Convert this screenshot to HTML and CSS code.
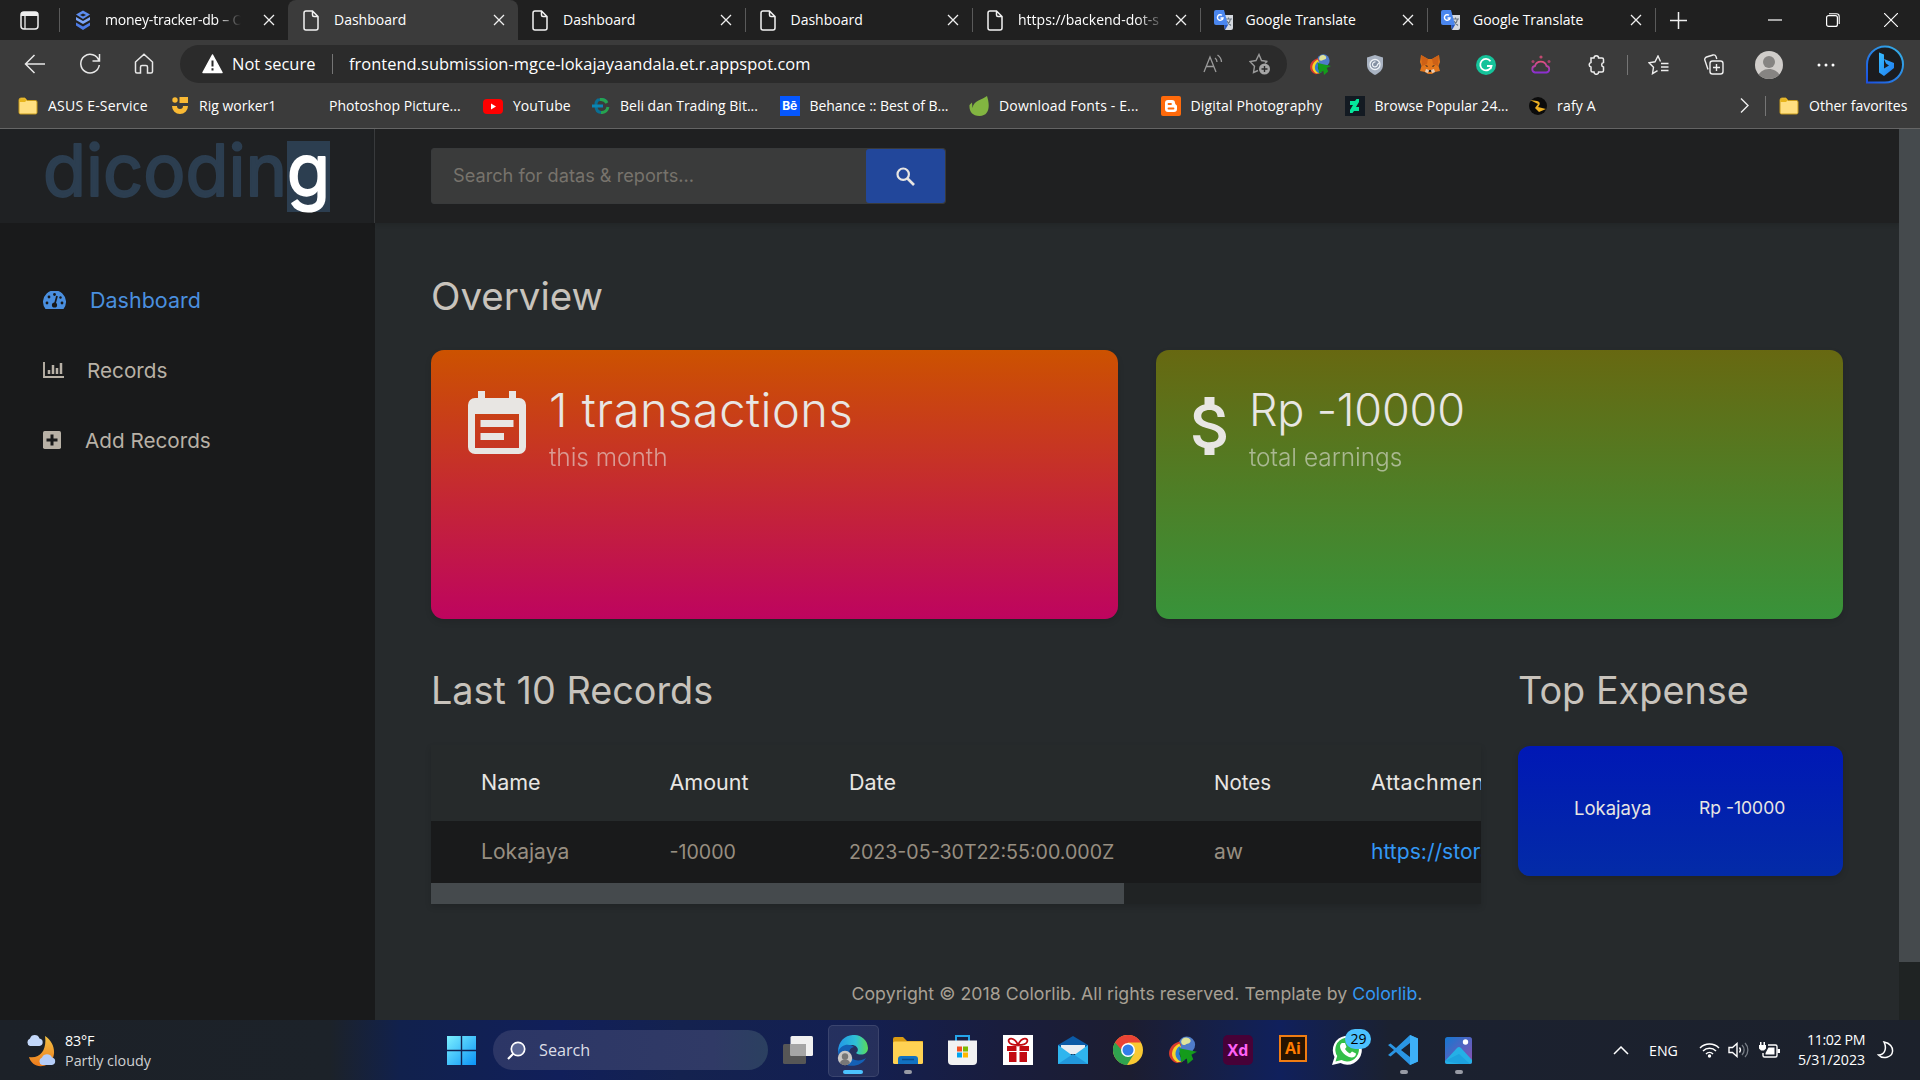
FILE: index.html
```html
<!DOCTYPE html>
<html lang="en">
<head>
<meta charset="utf-8">
<title>Dashboard</title>
<link rel="stylesheet" href="styles.css">
</head>
<body>
<svg class="defs" width="0" height="0">
  <defs>
    <symbol id="page" viewBox="0 0 16 21"><path d="M3 1h6.500l5.500 5.500V18a2 2 0 0 1-2 2H3a2 2 0 0 1-2-2V3a2 2 0 0 1 2-2zM9.500 1v4a1.500 1.500 0 0 0 1.500 1.500h4" fill="none" stroke="#f2f2f2" stroke-width="1.500"/></symbol>
    <symbol id="close" viewBox="0 0 12 12"><path d="M1 1l10 10M11 1L1 11" stroke="#f0f0f0" stroke-width="1.300"/></symbol>
    <symbol id="translate" viewBox="0 0 20 20"><path d="M8 5h11v13a2 2 0 0 1-2 2h-6z" fill="#d5d9df"/><path d="M11 9h7M14.500 7.500V9M16.500 9c-.5 3-2 5-4 6M13 11c.8 2 2 3 4 4.500" stroke="#6b7783" stroke-width="1.100" fill="none"/><path d="M2 0h8l4 15H2a2 2 0 0 1-2-2V2a2 2 0 0 1 2-2z" fill="#4a86ee"/><path d="M11 20l-1-5h4z" fill="#2756c0"/><path d="M8 5.300A2.800 2.800 0 1 0 9 8H6.500" fill="none" stroke="#fff" stroke-width="1.400"/></symbol>
    <symbol id="folder" viewBox="0 0 20 18"><path d="M1 3a2 2 0 0 1 2-2h4l2 2.500h8.500A1.500 1.500 0 0 1 19 5v10.500a1.500 1.500 0 0 1-1.500 1.500h-15A1.500 1.500 0 0 1 1 15.500z" fill="#ffdf80" stroke="#c69a1c"/><path d="M1.500 5V3A1.500 1.500 0 0 1 3 1.500h3.800L8.500 3.500 7 5z" fill="#e8b51d"/></symbol>
    <symbol id="idm" viewBox="0 0 30 30"><circle cx="19" cy="9.500" r="9" fill="#4f7cc9"/><path d="M13 6c1-5 7-6 10-2 1 4-3 4-5 5s-5 1-5-3z" fill="#dfe29a"/><path d="M11 6C-2 10-4 24 8 29l6-1C4 24 4 14 13 10z" fill="#d83a2c"/><path d="M11 8C1 13 1 24 9 28l6-1C6 23 7 15 13 12z" fill="#f5d52a"/><path d="M11 11C5 16 6 24 12 27l5-1C10 23 10 17 14 14z" fill="#2f7fd0"/><path d="M11 13l19 4-6 3 2 5-6 5-1-6-6 4z" fill="#149b1b"/></symbol>
  </defs>
</svg>

<div class="tabs">
  <div class="workspace"><svg width="19" height="19" viewBox="0 0 19 19"><rect x="1" y="1" width="17" height="17" rx="3" fill="none" stroke="#eee" stroke-width="1.500"/><path d="M1 3a2 2 0 0 1 2-2h13a2 2 0 0 1 2 2v2H1z" fill="#eee"/><path d="M5 5v13" stroke="#eee" stroke-width="1.300"/></svg></div>
  <div class="tab first"><svg class="fav" width="16" height="20" viewBox="0 0 16 20"><path d="M8 0l7 4-7 4.500L1 4z" fill="#5d8df0"/><path d="M8 3l3 1.500L8 6 5 4.500z" fill="#202020"/><path d="M1 6.500l7 4 7-4v3l-7 4-7-4z" fill="#7da6f8"/><path d="M1 12l7 4 7-4v3l-7 4.500L1 15z" fill="#4c7be6"/></svg><span class="label long">money-tracker-db – O</span><svg class="x"><use href="#close"/></svg></div>
  <div class="tab active"><svg class="fav"><use href="#page"/></svg><span class="label">Dashboard</span><svg class="x"><use href="#close"/></svg></div>
  <div class="tab plain"><svg class="fav"><use href="#page"/></svg><span class="label">Dashboard</span><svg class="x"><use href="#close"/></svg></div>
  <div class="tab"><svg class="fav"><use href="#page"/></svg><span class="label">Dashboard</span><svg class="x"><use href="#close"/></svg></div>
  <div class="tab"><svg class="fav"><use href="#page"/></svg><span class="label url">https://backend-dot-s</span><svg class="x"><use href="#close"/></svg></div>
  <div class="tab"><svg class="fav wide"><use href="#translate"/></svg><span class="label">Google Translate</span><svg class="x"><use href="#close"/></svg></div>
  <div class="tab"><svg class="fav wide"><use href="#translate"/></svg><span class="label">Google Translate</span><svg class="x"><use href="#close"/></svg></div>
  <div class="tab new"><svg width="17" height="17" viewBox="0 0 17 17"><path d="M8.500 0v17M0 8.500h17" stroke="#eee" stroke-width="1.500"/></svg></div>
  <div class="window">
    <svg width="14" height="14" viewBox="0 0 14 14"><path d="M0 7h14" stroke="#fff" stroke-width="1.200"/></svg>
    <svg width="14" height="14" viewBox="0 0 14 14"><rect x=".6" y="2.600" width="10.800" height="10.800" rx="2" fill="none" stroke="#fff" stroke-width="1.200"/><path d="M3 .8h7.500a2.700 2.700 0 0 1 2.700 2.700V11" fill="none" stroke="#fff" stroke-width="1.100"/></svg>
    <svg width="14" height="14" viewBox="0 0 12 12"><path d="M0 0l12 12M12 0L0 12" stroke="#fff"/></svg>
  </div>
</div>

<div class="toolbar">
  <div class="nav-buttons">
    <svg width="22" height="20" viewBox="0 0 22 20"><path d="M21 10H2M10.500 1L1.500 10l9 9" fill="none" stroke="#e8e8e8" stroke-width="1.500"/></svg>
    <svg width="22" height="22" viewBox="0 0 22 22"><path d="M20 8A9.300 9.300 0 1 0 20.300 12M20.500 1v7h-7" fill="none" stroke="#e8e8e8" stroke-width="1.500"/></svg>
    <svg width="20" height="21" viewBox="0 0 20 21"><path d="M1.500 9L10 1.300 18.500 9v9.500a1.500 1.500 0 0 1-1.500 1.500h-3.500v-6a1.500 1.500 0 0 0-1.500-1.500H8A1.500 1.500 0 0 0 6.500 14v6H3a1.500 1.500 0 0 1-1.500-1.500z" fill="none" stroke="#e8e8e8" stroke-width="1.500"/></svg>
  </div>
  <div class="address">
    <svg class="warn" width="21" height="20" viewBox="0 0 21 20"><path d="M10.500 1L20 18.500H1z" fill="#fff" stroke="#fff" stroke-width="1.500" stroke-linejoin="round"/><path d="M10.500 6.500v6M10.500 14.300v2.200" stroke="#2b2b2b" stroke-width="2"/></svg>
    <span class="insecure">Not secure</span><span class="bar"></span><span class="href">frontend.submission-mgce-lokajayaandala.et.r.appspot.com</span>
    <svg class="read" width="20" height="20" viewBox="0 0 20 20"><path d="M1 18L7 3l6 15M3.200 12.500h7.600M12 4a5 5 0 0 1 2 4M14.500 1a9 9 0 0 1 4 7" fill="none" stroke="#9a9a9a" stroke-width="1.300"/></svg>
    <svg width="22" height="22" viewBox="0 0 22 22"><path d="M18.500 8.500L12.500 7.500 10 1.500 7 7.500 1 8.500l4.500 4.700-1 6.300 4.500-2" fill="none" stroke="#9a9a9a" stroke-width="1.400"/><path d="M18 8.500l-2 1.800" stroke="#9a9a9a" stroke-width="1.400"/><circle cx="15.500" cy="16" r="5.500" fill="#a5a5a5"/><path d="M15.500 13v6M12.500 16h6" stroke="#2b2b2b" stroke-width="1.400"/></svg>
  </div>
  <div class="extensions">
    <svg width="21" height="21"><use href="#idm"/></svg>
    <svg width="18" height="20" viewBox="0 0 18 20"><path d="M9 0l8 2.500V10c0 5-4 8-8 10-4-2-8-5-8-10V2.500z" fill="#a9b3c2"/><circle cx="9" cy="9.500" r="5" fill="#8490a3" stroke="#eef2f7" stroke-width="1.300"/><path d="M9.500 7a2.500 2.500 0 1 0 2 2.500L13 8" fill="none" stroke="#eef2f7" stroke-width="1.200"/></svg>
    <svg width="20" height="19" viewBox="0 0 20 19"><path d="M1 0l7 4h4l7-4 1 7-1.500 4 1.500 5-5 1-3 2H8l-3-2-5-1 1.500-5L0 7z" fill="#e2761b"/><path d="M1 0l7 4-1 5-5 2zM19 0l-7 4 1 5 5 2z" fill="#cd6116"/><path d="M5 10l3 1-1 1zM15 10l-3 1 1 1zM8 15h4l-1 2H9z" fill="#222"/><path d="M6 14l3 1-1 3-3-1zM14 14l-3 1 1 3 3-1z" fill="#e8cdb5"/></svg>
    <svg width="20" height="20" viewBox="0 0 20 20"><circle cx="10" cy="10" r="10" fill="#15c39a"/><path d="M14.500 6.200A5.700 5.700 0 1 0 15.500 11H11M15.500 11l-1 3" fill="none" stroke="#fff" stroke-width="1.800"/></svg>
    <svg width="20" height="19" viewBox="0 0 20 19"><defs><linearGradient id="cl" x2="0" y2="1"><stop stop-color="#e0507e"/><stop offset="1" stop-color="#8b2fd0"/></linearGradient></defs><path d="M4 17.500a3.300 3.300 0 0 1 0-6.500 6 6 0 0 1 11.500 0 3.300 3.300 0 0 1 0 6.500z" fill="none" stroke="url(#cl)" stroke-width="1.800"/><circle cx="10" cy="2" r="1.600" fill="#c04a70"/><circle cx="2" cy="6.500" r="1.500" fill="#a8436a"/><circle cx="18" cy="6.500" r="1.500" fill="#a8436a"/></svg>
    <svg width="20" height="21" viewBox="0 0 20 21"><path d="M5 4h3a2.300 2.300 0 0 1 4.600 0H16a1.500 1.500 0 0 1 1.500 1.500V8.500a2.300 2.300 0 0 0 0 4.500v3.500A1.500 1.500 0 0 1 16 18h-3.400a2.300 2.300 0 0 1-4.600 0H6.500A1.500 1.500 0 0 1 5 16.500V13a2.300 2.300 0 0 1 0-4.500z" fill="none" stroke="#eee" stroke-width="1.500"/></svg>
    <span class="bar"></span>
    <svg width="21" height="20" viewBox="0 0 21 20"><path d="M12.500 6.500L10 1 7 6.800l-6 1 4.500 4.500-1 6.400 5-3M13 8.500h7.500M13 12h7.500M13 15.500h7.500" fill="none" stroke="#eee" stroke-width="1.400"/></svg>
    <svg width="21" height="21" viewBox="0 0 21 21"><rect x="7" y="7" width="13" height="13" rx="2.500" fill="none" stroke="#eee" stroke-width="1.400"/><path d="M13.500 10v7M10 13.500h7M5 15.500l-3-9A2.500 2.500 0 0 1 3.500 3L10 1a2.500 2.500 0 0 1 3 1.500l.8 2.500" fill="none" stroke="#eee" stroke-width="1.400"/></svg>
    <svg width="28" height="28" viewBox="0 0 28 28"><defs><clipPath id="av"><circle cx="14" cy="14" r="14"/></clipPath></defs><g clip-path="url(#av)"><path d="M0 0h28v28H0z" fill="#d0cdca"/><circle cx="14" cy="11" r="6" fill="#868482"/><path d="M2 30c0-16 24-16 24 0z" fill="#868482"/></g></svg>
    <svg width="18" height="4" viewBox="0 0 18 4"><circle cx="2" cy="2" r="1.500" fill="#fff"/><circle cx="9" cy="2" r="1.500" fill="#fff"/><circle cx="16" cy="2" r="1.500" fill="#fff"/></svg>
    <svg width="38" height="39" viewBox="0 0 38 39"><defs><linearGradient id="bg1" x1="1" x2="0" y2="1"><stop stop-color="#36b6e8"/><stop offset="1" stop-color="#1b50e0"/></linearGradient><linearGradient id="bg2" x2="1" y2="1"><stop stop-color="#37bdff"/><stop offset="1" stop-color="#1f7af0"/></linearGradient></defs><path d="M1 37.500V19.500A18 18 0 1 1 19 37.500z" fill="#1b1c1f" stroke="url(#bg1)" stroke-width="2"/><path d="M13 7.500l5 2v14l5-3-3-2-2-4.500 10 4v5L18 31l-5-3.500z" fill="url(#bg2)"/></svg>
  </div>
</div>

<div class="bookmarks">
  <div class="bm"><svg width="20" height="18"><use href="#folder"/></svg><span class="w100">ASUS E-Service</span></div>
  <div class="bm"><svg width="18" height="18" viewBox="0 0 18 18"><path d="M1 9a8 8 0 0 0 16 0h-5a3 3 0 0 1-6 0z" fill="#f9b934"/><circle cx="4" cy="3" r="2.700" fill="#f9b934"/><path d="M8.500 0H17v6H8.500z" fill="#f9b934"/></svg><span class="w78">Rig worker1</span></div>
  <div class="bm"><span class="blank"></span><span class="w132">Photoshop Picture...</span></div>
  <div class="bm"><svg width="20" height="15" viewBox="0 0 20 15"><rect width="20" height="15" rx="4" fill="#f00"/><path d="M8 4.500v6l5-3z" fill="#fff"/></svg><span class="w57">YouTube</span></div>
  <div class="bm"><svg width="18" height="16" viewBox="0 0 18 16"><path d="M14.500 4A6.500 6.500 0 0 0 8 1.500C3 2 4 7 4 8s0 6 5 6.500" fill="none" stroke="#0a6f94" stroke-width="3"/><path d="M8 1.500c3-.3 5.500.5 7 3.500M16 9c-1 4-4 5.700-7 5.500" fill="none" stroke="#26a450" stroke-width="3"/><path d="M0 8h11" stroke="#0a86b4" stroke-width="3"/></svg><span class="w137">Beli dan Trading Bit...</span></div>
  <div class="bm"><b class="be">Bē</b><span class="w138">Behance :: Best of B...</span></div>
  <div class="bm"><svg width="20" height="20" viewBox="0 0 20 20"><path d="M18 0c3 9 3 20-7.500 20C3 20 0 15 .5 9L3 6.500 3.500 12C5 4 13 4 18 0z" fill="#82b541"/></svg><span class="w139">Download Fonts - E...</span></div>
  <div class="bm"><svg width="20" height="20" viewBox="0 0 20 20"><rect width="20" height="20" rx="2" fill="#ff6a0b"/><path d="M7 4h4a3 3 0 0 1 3 3c0 2 2 1.500 2 3v3a3 3 0 0 1-3 3H7a3 3 0 0 1-3-3V7a3 3 0 0 1 3-3z" fill="#fff"/><path d="M7.500 8H10M7.500 12.500h5" stroke="#ff6a0b" stroke-width="1.800" stroke-linecap="round"/></svg><span class="w132 wider">Digital Photography</span></div>
  <div class="bm"><svg width="20" height="20" viewBox="0 0 20 20"><path d="M0 0h20v20H0z" fill="#131a22"/><path d="M14 3v3l-3 5h3v4H9l-1.500 2H5v-3l3-5H5V5h5l1.500-2z" fill="#05e59b"/></svg><span class="w133">Browse Popular 24...</span></div>
  <div class="bm"><svg width="18" height="18" viewBox="0 0 18 18"><circle cx="9" cy="9" r="9" fill="#0b0b0b"/><path d="M1 3l7 1c4 1 3 4 1 6l8 2-7 3-4-4 3-4z" fill="#edb022"/></svg><span class="w39">rafy A</span></div>
  <svg class="more" width="9" height="15" viewBox="0 0 9 15"><path d="M1 .5l7 7-7 7" fill="none" stroke="#eee" stroke-width="1.400"/></svg>
  <span class="bar"></span>
  <div class="bm"><svg width="20" height="18"><use href="#folder"/></svg><span class="w98">Other favorites</span></div>
</div>

<div class="viewport">
  <aside class="sidebar">
    <div class="logo">
      <svg width="290" height="84" viewBox="0 0 290 84"><rect x="243" y="10" width="43" height="71" fill="#2c3e50"/><text class="word" x="-1" y="65" textLength="244" lengthAdjust="spacingAndGlyphs">dicodin</text><text class="word light" x="243" y="65" textLength="43" lengthAdjust="spacingAndGlyphs">g</text></svg>
    </div>
    <nav class="menu">
      <a class="item current"><svg width="23" height="18" viewBox="0 0 23 18"><path d="M2.500 18A11.500 11.500 0 1 1 20.500 18z" fill="#4a8fdf"/><g fill="#191a1b"><circle cx="4" cy="12" r="1.400"/><circle cx="6" cy="6" r="1.400"/><circle cx="11.500" cy="3.500" r="1.400"/><circle cx="19" cy="12" r="1.400"/><circle cx="17.500" cy="6.500" r="1.200"/><circle cx="11.500" cy="14" r="2.600"/></g><path d="M11.700 13.500L14 5" stroke="#191a1b" stroke-width="1.700"/></svg><span>Dashboard</span></a>
      <a class="item records"><svg width="21" height="16" viewBox="0 0 21 16"><path d="M1 0v15h20" fill="none" stroke="#b8b1a6" stroke-width="1.900"/><path d="M6 12V8M10 12V3M14 12V6M18 12V1" stroke="#b8b1a6" stroke-width="2.500"/></svg><span>Records</span></a>
      <a class="item add"><svg width="18" height="18" viewBox="0 0 18 18"><rect width="18" height="18" rx="1.700" fill="#b8b1a6"/><path d="M9 3.500v11M3.500 9h11" stroke="#191a1b" stroke-width="3"/></svg><span>Add Records</span></a>
    </nav>
  </aside>
  <div class="page">
    <header class="top"><div class="search"><span class="hint">Search for datas &amp; reports...</span><span class="go"><svg width="19" height="19" viewBox="0 0 19 19"><circle cx="7.200" cy="7.200" r="5.700" fill="none" stroke="#e8e6e3" stroke-width="2.200"/><path d="M11.500 11.500l6.500 6.500" stroke="#e8e6e3" stroke-width="2.600"/></svg></span></div></header>
    <main class="content">
      <h2 class="overview">Overview</h2>
      <div class="cards">
        <section class="card orange">
          <svg class="cal" width="58" height="64" viewBox="0 0 58 64"><path d="M10 0h7v7h24V0h7v7h3a7 7 0 0 1 7 7v42a7 7 0 0 1-7 7H7a7 7 0 0 1-7-7V14a7 7 0 0 1 7-7h3zM7 23v34h44V23z" fill="#e8e6e3" fill-rule="evenodd"/><path d="M12.500 29h33v7h-33zM12.500 42H36v7H12.500z" fill="#e8e6e3"/></svg>
          <div><p class="big tx">1 transactions</p><p class="small">this month</p></div>
        </section>
        <section class="card green">
          <svg class="dollar" width="33" height="58" viewBox="0 0 33 58"><path d="M11.500 0h10v7.500C28 9 31.500 13.500 31.800 20h-7.200c-.2-4.500-3-7-8-7-5.300 0-8.300 2.300-8.300 6 0 3.400 2.700 5.300 9.500 7.100C28 28.600 33 33 33 39.500c0 6.300-4.300 10.300-11.500 11.500v7h-10v-7C4.500 49.500.3 45.500 0 38.300h7.200c.5 4.700 3.800 7 9.300 7 6.300 0 9-2.800 9-6 0-3.600-2-5.700-9.500-7.600C6.500 29.300.8 26 .8 19 .8 13 5 8.800 11.500 7.500z" fill="#e8e6e3"/></svg>
          <div><p class="big rp">Rp -10000</p><p class="small">total earnings</p></div>
        </section>
      </div>
      <div class="lower">
        <section class="recent">
          <h2>Last 10 Records</h2>
          <div class="table">
            <div class="row head"><span>Name</span><span>Amount</span><span>Date</span><span class="n">Notes</span><span class="at">Attachment</span></div>
            <div class="row"><span>Lokajaya</span><span class="num">-10000</span><span class="num">2023-05-30T22:55:00.000Z</span><span>aw</span><a>https://storage.googleapis.com</a></div>
            <div class="hscroll"><div class="hthumb"></div></div>
          </div>
        </section>
        <section class="top-expense">
          <h2>Top Expense</h2>
          <div class="expense"><span class="who">Lokajaya</span><span>Rp -10000</span></div>
        </section>
      </div>
      <footer>Copyright © 2018 Colorlib. All rights reserved. Template by <a>Colorlib</a>.</footer>
    </main>
  </div>
  <div class="vscroll"><div class="vthumb"></div></div>
</div>

<div class="taskbar">
  <div class="weather">
    <svg width="30" height="34" viewBox="0 0 30 34"><defs><linearGradient id="mn" x2="0" y2="1"><stop stop-color="#f3c245"/><stop offset="1" stop-color="#ee7b1b"/></linearGradient></defs><path d="M19 3c11 7 12 22 3 28-8 5-17 1-19-7 12 2 18-8 16-21z" fill="url(#mn)"/><path d="M4 13a4 4 0 0 1 0-7.500 5 5 0 0 1 9.500 0 3.800 3.800 0 0 1 0 7.500z" fill="#c3d8fa"/><path d="M16 32a4 4 0 0 1 0-7.500 5.500 5.500 0 0 1 10 0 3.800 3.800 0 0 1 0 7.500z" fill="#b5cdf8"/></svg>
    <div class="report"><div class="temp">83°F</div><div class="sky">Partly cloudy</div></div>
  </div>
  <svg class="start" width="29" height="29" viewBox="0 0 29 29"><defs><linearGradient id="wn" x2="1" y2="1"><stop stop-color="#7cf0ff"/><stop offset="1" stop-color="#0a93f7"/></linearGradient></defs><path d="M0 0h13.800v13.800H0zM15.200 0H29v13.800H15.200zM0 15.200h13.800V29H0zM15.200 15.200H29V29H15.200z" fill="url(#wn)"/></svg>
  <div class="tsearch"><svg width="19" height="19" viewBox="0 0 19 19"><circle cx="11" cy="8" r="6.700" fill="#5a6694" stroke="#fff" stroke-width="1.700"/><path d="M6.500 12.500L1 18" stroke="#fff" stroke-width="2.200"/></svg><span>Search</span></div>
  <div class="apps">
    <div class="app"><svg width="30" height="28" viewBox="0 0 30 28"><rect y="8" width="23" height="20" rx="1.500" fill="#565656"/><rect x="7.500" width="22.500" height="20" rx="1.500" fill="#f0f0f0"/><path d="M7.500 8H23v12H7.500z" fill="#a5a5a5"/></svg></div>
    <div class="app on"><svg width="32" height="31" viewBox="0 0 32 31"><defs><linearGradient id="ed" x2="1"><stop stop-color="#2196e8"/><stop offset=".6" stop-color="#2fc1d5"/><stop offset="1" stop-color="#5bdc55"/></linearGradient></defs><path d="M1 17C1-5 30-5 31 13c0 7-8 8-12 5 4-3 1-8-4-8C8 10 3 15 1 19z" fill="url(#ed)"/><path d="M1 17c3-8 11-9 16-5-7 1-6 11 1 13 4 1 8 0 11-2-5 10-21 10-26 2z" fill="#1460b5"/><circle cx="8" cy="23" r="7.200" fill="#c9c6c4"/><circle cx="8" cy="21.500" r="3.200" fill="#777"/><path d="M3 28c1-5 9-5 10 0-3 3-7 3-10 0z" fill="#777"/></svg><i class="run wide"></i></div>
    <div class="app"><svg width="30" height="27" viewBox="0 0 30 27"><path d="M0 2a2 2 0 0 1 2-2h8l4 4h16v8H0z" fill="#d99a12"/><rect y="4.500" width="30" height="22.500" rx="1.500" fill="#ffd253"/><path d="M5 27v-5a3 3 0 0 1 3-3h14a3 3 0 0 1 3 3v5z" fill="#1272c2"/><path d="M9 22.500h12" stroke="#0a4d8d" stroke-width="1.500"/></svg><i class="run"></i></div>
    <div class="app"><svg width="29" height="30" viewBox="0 0 29 30"><path d="M8 7V1h13v6" fill="none" stroke="#25a4ea" stroke-width="2"/><path d="M0 5.500h29V26a4 4 0 0 1-4 4H4a4 4 0 0 1-4-4z" fill="#f2f2f2"/><path d="M9 11.500h5v5H9z" fill="#f25022"/><path d="M15 11.500h5v5h-5z" fill="#7fba00"/><path d="M9 17.500h5v5H9z" fill="#00a4ef"/><path d="M15 17.500h5v5h-5z" fill="#ffb900"/></svg></div>
    <div class="app"><svg width="30" height="30" viewBox="0 0 30 30"><path d="M0 0h30v30H0z" fill="#fff"/><path d="M4 11h22v5H4zM6 17h18v10H6z" fill="#c30b12"/><path d="M13.500 11h3v16h-3z" fill="#fff"/><path d="M15 10C11 1 4 3 6 7c1 3 6 3 9 3 3 0 8 0 9-3 2-4-5-6-9 3z" fill="none" stroke="#c30b12" stroke-width="1.800"/></svg></div>
    <div class="app"><svg width="30" height="28" viewBox="0 0 30 28"><path d="M15 0l15 9v4H0V9z" fill="#0b5aa6"/><path d="M3 9h24v9H3z" fill="#e8edf2"/><path d="M0 9l15 11 15-11v19H0z" fill="#2fb5ee"/><path d="M15 18l15 10H0z" fill="#2298dc"/></svg></div>
    <div class="app"><svg width="30" height="30" viewBox="0 0 30 30"><circle cx="15" cy="15" r="15" fill="#f9c933"/><path d="M2 7.500A15 15 0 0 0 14 30l7-11-6-4z" fill="#2fa24f"/><path d="M2 7.500A15 15 0 0 1 28 7.500H15l-5 9z" fill="#ea4335"/><circle cx="15" cy="15" r="7" fill="#fff"/><circle cx="15" cy="15" r="5.500" fill="#327ee8"/></svg></div>
    <div class="app"><svg width="30" height="28"><use href="#idm"/></svg></div>
    <div class="app"><span class="xd">Xd</span></div>
    <div class="app"><span class="ai">Ai</span></div>
    <div class="app"><svg width="31" height="30" viewBox="0 0 31 30"><path d="M0 30l2.500-8A14.500 14.500 0 1 1 8.500 28z" fill="#fff"/><path d="M3.500 26.500l1.700-5.500A11.800 11.800 0 1 1 9.500 25z" fill="#34bf49"/><path d="M10 8l3 0 1.500 4-1.500 2c1.500 2.500 3 3.500 5 4.500l2-2 4 2c0 4-4 4.500-7 3.500C12 20 8 15 8 11c0-1 1-2.500 2-3z" fill="#fff"/></svg><em class="count">29</em></div>
    <div class="app"><svg width="30" height="30" viewBox="0 0 30 30"><path d="M22 0l8 3.500v23L22 30 8 17l-5.500 4.500L0 20l6-5-6-5 2.500-1.500L8 13zM22 8l-9 7 9 7z" fill="#2a95e3" fill-rule="evenodd"/><path d="M22 0l8 3.500v23L22 30z" fill="#3db0f7"/></svg><i class="run"></i></div>
    <div class="app"><svg width="27" height="27" viewBox="0 0 27 27"><defs><linearGradient id="ph" x2="1" y2="1"><stop stop-color="#1378d2"/><stop offset="1" stop-color="#8f4fb0"/></linearGradient></defs><rect width="27" height="27" rx="2.500" fill="url(#ph)"/><path d="M0 24l12-13q2-2 4 0l11 12v1.500A2.500 2.500 0 0 1 24.500 27h-22A2.500 2.500 0 0 1 0 24.500z" fill="#25b0e6"/><path d="M15 27L0 24l14-7 11 10z" fill="#1694d8" opacity=".5"/><circle cx="20.500" cy="5" r="2.700" fill="#fff"/></svg><i class="run"></i></div>
  </div>
  <div class="tray">
    <svg width="16" height="9" viewBox="0 0 16 9"><path d="M1 8l7-7 7 7" fill="none" stroke="#fff" stroke-width="1.500"/></svg>
    <span class="lang">ENG</span>
    <svg width="21" height="16" viewBox="0 0 21 16"><path d="M1 6a13.500 13.500 0 0 1 19 0M4 9a9.200 9.200 0 0 1 13 0M7 12a5 5 0 0 1 7 0" fill="none" stroke="#fff" stroke-width="1.500"/><circle cx="10.500" cy="14" r="1.700" fill="#fff"/></svg>
    <svg class="vol" width="21" height="16" viewBox="0 0 21 16"><path d="M1 5.500h3.500L9 1.500v13l-4.500-4H1z" fill="none" stroke="#fff" stroke-width="1.400"/><path d="M11.500 5.500a4 4 0 0 1 0 5" fill="none" stroke="#fff" stroke-width="1.300"/><path d="M14 3a7 7 0 0 1 0 10M17 1a10 10 0 0 1 0 14" fill="none" stroke="#777d85" stroke-width="1.300"/></svg>
    <svg class="bat" width="21" height="17" viewBox="0 0 21 17"><path d="M9 3h7.500A1.500 1.500 0 0 1 18 4.500v9a1.500 1.500 0 0 1-1.500 1.500h-11A1.500 1.500 0 0 1 4 13.500V11" fill="none" stroke="#fff" stroke-width="1.400"/><path d="M9.500 5.500h6v7h-9V11zM18.500 7H21v4h-2.500zM0 3h7v3.500L5 8.500H2L0 6.500zM1 0h1.500v3H1zM4.500 0H6v3H4.500z" fill="#fff"/></svg>
    <div class="clock"><div class="time">11:02 PM</div><div>5/31/2023</div></div>
    <svg width="17" height="18" viewBox="0 0 17 18"><path d="M7 1c6 1 9 5 8.500 9.500C15 16 6 19 1.500 14 8 14 10 7 7 1z" fill="none" stroke="#fff" stroke-width="1.500"/></svg>
  </div>
</div>
</body>
</html>
```
FILE: styles.css
```css
* { box-sizing: border-box; }
body { margin: 0; width: 1920px; height: 1080px; overflow: hidden; background: #262a2c; font-family: "Open Sans", sans-serif; color: #fff; display: flex; flex-direction: column; }
svg { display: block; flex: none; }
.defs { position: absolute; }
p, h2 { margin: 0; font-weight: 400; }

/* browser tabs */
.tabs { height: 40px; flex: none; background: #202020; display: flex; }
.workspace { width: 59px; padding: 11px 0 0 20px; }
.tab { width: 227.5px; height: 40px; display: flex; align-items: center; padding: 0 13px 0 15px; background: linear-gradient(#5a5a5a, #5a5a5a) 0 8px / 1px 24px no-repeat; }
.tab.active { background: #3b3b3b; border-radius: 8px 8px 0 0; width: 230px; }
.tab.plain { width: 226.500px; padding-left: 14px; background: none; }
.tab.first { width: 229px; padding-left: 16px; }
.fav { width: 16px; height: 21px; }
.fav.wide { width: 20px; height: 20px; margin-left: -1px; }
.fav.wide + .label { padding-left: 12px; }
.label { flex: 1; padding-left: 15px; font-size: 14px; line-height: 38px; white-space: nowrap; overflow: hidden; color: #fff; }
.label.long { flex: 0 1 150px; margin-right: auto; letter-spacing: -.2px; padding-left: 14px; -webkit-mask-image: linear-gradient(90deg, #000 84%, transparent); mask-image: linear-gradient(90deg, #000 84%, transparent); }
.label.url { flex: 0 1 163px; margin-right: auto; -webkit-mask-image: linear-gradient(90deg, #000 82%, transparent); mask-image: linear-gradient(90deg, #000 82%, transparent); }
.x { width: 12px; height: 12px; }
.tab.new { width: 60px; }
.window { flex: 1; display: flex; align-items: center; justify-content: flex-end; gap: 44px; padding-right: 22px; }

/* toolbar */
.toolbar { height: 48px; flex: none; background: #3b3b3b; display: flex; align-items: flex-start; padding-top: 5px; }
.nav-buttons { width: 180px; height: 37px; display: flex; align-items: center; gap: 33px; padding-left: 24px; }
.address { width: 1107px; height: 38px; border-radius: 19px; background: #2b2b2b; display: flex; align-items: center; padding: 0 16px 0 22px; font-size: 16.450px; }
.insecure { width: 84px; margin-left: 9px; white-space: nowrap; padding-bottom: 2px; }
.bar { width: 1px; height: 20px; background: #757575; }
.address .bar { margin: 0 16px; }
.href { white-space: nowrap; padding-bottom: 2px; letter-spacing: .03px; }
.read { margin: 0 26px 0 auto; }
.extensions { flex: 1; height: 38px; display: grid; grid-template-columns: repeat(6, 55.200px) 7px 55.200px 55.200px 55.200px 60px 58px; align-items: center; justify-items: center; padding-left: 5.500px; }

/* bookmarks bar */
.bookmarks { height: 41px; flex: none; background: #3b3b3b; border-bottom: 1px solid #666; display: flex; align-items: center; gap: 22px; padding: 0 13px 5px 18px; font-size: 14px; line-height: 20px; white-space: nowrap; }
.bm { display: flex; align-items: center; gap: 10px; }
.bm svg { margin-top: 1px; }
.blank { width: 20px; }
.w100 { width: 101px; letter-spacing: .22px; }
.w78 { width: 78px; }
.w132 { width: 132px; }
.w57 { width: 57px; }
.w137 { width: 137.500px; }
.w138 { width: 137.500px; letter-spacing: -.05px; }
.w139 { width: 139.500px; letter-spacing: .15px; }
.wider { letter-spacing: .15px; }
.w133 { width: 132.500px; }
.w39 { width: 40px; letter-spacing: .2px; }
.w98 { width: 98px; }
.be { width: 20px; height: 20px; background: #0557ff; font: 700 12px/20px "Inter", sans-serif; text-align: center; letter-spacing: -.3px; }
.more { margin-left: auto; }
.bookmarks .bar { margin-right: -9px; margin-left: -6px; }

/* web page */
.viewport { height: 891px; flex: none; display: flex; font-family: "Inter", "Open Sans", sans-serif; background: #262a2c; }
.sidebar { width: 375px; background: #191a1b; }
.logo { height: 94px; background: #1f2123; border-right: 1px solid #3b3d3f; padding: 2px 0 0 44px; }
.word { font: 400 72px "Inter", sans-serif; fill: #2c3e50; stroke: #2c3e50; stroke-width: 2px; stroke-linejoin: round; }
.word.light { fill: #fff; stroke: #fff; }
.menu { padding-top: 42px; }
.item { display: flex; align-items: center; height: 70px; padding-left: 43px; gap: 24px; font-size: 20.700px; color: #b8b1a6; }
.item.current { color: #4a8fdf; font-size: 21.500px; gap: 24px; }
.item.records { gap: 23px; }
.page { width: 1524px; }
.top { height: 94px; background: #1f2021; padding: 19px 0 0 56px; box-shadow: 0 2px 4px rgba(0,0,0,.12); }
.search { width: 515px; height: 56px; background: #3a3b3b; border-radius: 3px; display: flex; border: 1px solid #383a3b; }
.hint { flex: 1; padding-left: 21px; font-size: 18.200px; line-height: 52px; color: #77736c; }
.go { width: 79px; background: #22479b; border-radius: 3px; display: flex; align-items: center; justify-content: center; }
.content { padding: 0 56px; }
h2 { font-size: 37.800px; line-height: 51px; color: #c8c3bc; white-space: nowrap; }
.overview { margin-top: 48px; font-size: 38.500px; }
.cards { margin-top: 28px; display: flex; gap: 38px; }
.card { width: 687px; height: 269px; border-radius: 13px; padding: 31px 37px; display: flex; color: #e8e6e3; box-shadow: 0 3px 6px rgba(0,0,0,.12); }
.orange { background: linear-gradient(#cc5200, #be045f); }
.green { background: linear-gradient(#676811, #38933a); }
.cal { margin: 10px 23px 0 0; }
.dollar { margin: 16px 23px 0 0; }
.big { font-weight: 300; font-size: 47px; line-height: 58px; white-space: nowrap; }
.tx { letter-spacing: .5px; }
.rp { font-size: 45px; letter-spacing: -.2px; }
.small { font-weight: 300; font-size: 24.400px; line-height: 30px; margin-top: 3px; opacity: .58; }
.lower { margin-top: 46px; display: flex; gap: 37px; }
.table { width: 1050px; height: 159px; margin-top: 29px; overflow: hidden; background: #262a2b; box-shadow: 0 3px 6px rgba(0,0,0,.14); }
.row { display: grid; grid-template-columns: 188.500px 179.500px 365px 157px 400px; padding-left: 50px; height: 62px; line-height: 62px; background: #191a1b; color: #978e81; font-size: 21.100px; white-space: nowrap; }
.row.head { height: 76px; line-height: 75px; background: none; color: #e8e6e3; font-size: 21.500px; }
.row a, footer a { color: #3398f5; }
.row .n { font-size: 20.500px; }
.row .at { letter-spacing: .5px; }
.num { font-size: 19.600px; }
.hscroll { height: 21px; background: #202324; }
.hthumb { width: 693px; height: 21px; background: #454a4d; }
.top-expense { width: 325px; }
.expense { margin-top: 30px; height: 130px; border-radius: 12px; background: linear-gradient(#0018b5, #032ba7); color: #e8e6e3; display: flex; gap: 47px; padding-left: 56px; font-size: 17.500px; line-height: 124px; white-space: nowrap; box-shadow: 0 3px 6px rgba(0,0,0,.15); }
.who { width: 78px; font-size: 18.500px; }
footer { margin-top: 78px; text-align: center; font-size: 17.700px; letter-spacing: .05px; line-height: 24px; color: #a8a095; white-space: nowrap; }
.vscroll { width: 21px; background: #1f2323; }
.vthumb { height: 833px; background: #454a4d; }

/* taskbar */
.taskbar { height: 60px; flex: none; display: flex; align-items: center; background: linear-gradient(90deg, #1c2128 0, #1c2229 330px, #11214d 400px, #111f5a 560px, #14224f 680px, #131f52 850px, #191d3d 1000px, #1c1d30 1130px, #14204d 1230px, #10205c 1280px, #1b2130 1390px, #1c212b 100%); }
.weather { width: 447px; display: flex; align-items: center; padding-left: 26px; gap: 9px; font-size: 14.350px; line-height: 20px; }
.report { padding-top: 1px; }
.temp { letter-spacing: -.2px; }
.sky { color: #cfd0d2; }
.tsearch { width: 275px; height: 40px; margin-left: 17px; border-radius: 20px; background: linear-gradient(90deg, #2c3666, #303a66 80%, #2b4060); display: flex; align-items: center; padding-left: 14px; gap: 13px; font-size: 16.200px; color: #dcdee6; }
.apps { display: flex; margin-left: 2px; }
.app { position: relative; width: 55.050px; height: 50px; display: flex; align-items: center; justify-content: center; }
.on::before { content: ""; position: absolute; left: 3px; top: 0; width: 49px; height: 50px; border-radius: 5px; background: rgba(255,255,255,.08); border: 1px solid rgba(255,255,255,.1); }
.on svg { position: relative; }
.run { position: absolute; bottom: 1px; left: 24px; width: 8px; height: 4px; border-radius: 2px; background: #989ba5; }
.run.wide { left: 18px; width: 20px; background: #4cc2ff; }
.xd, .ai { width: 30px; height: 30px; border-radius: 5px; background: #470137; color: #ff61f6; font: 700 16px/30px "Open Sans", sans-serif; text-align: center; }
.ai { width: 28px; height: 27px; line-height: 22px; margin-top: -3px; border-radius: 0; border: 2px solid #f07c12; background: #261300; color: #ff7c00; }
.count { position: absolute; left: 25px; top: 4px; width: 26px; height: 20px; border-radius: 10px; background: #4cc2ff; color: #000; font: normal 14px/20px "Open Sans", sans-serif; text-align: center; }
.tray { margin-left: auto; display: flex; align-items: center; padding-right: 26px; font-size: 14.200px; }
.lang { width: 29px; margin: 0 21px 0 20px; }
.vol { margin-left: 8px; }
.bat { margin-left: 10px; }
.clock { width: 67px; margin: 0 12px 0 18px; text-align: right; line-height: 20px; white-space: nowrap; }
.time { letter-spacing: -.4px; }
```
